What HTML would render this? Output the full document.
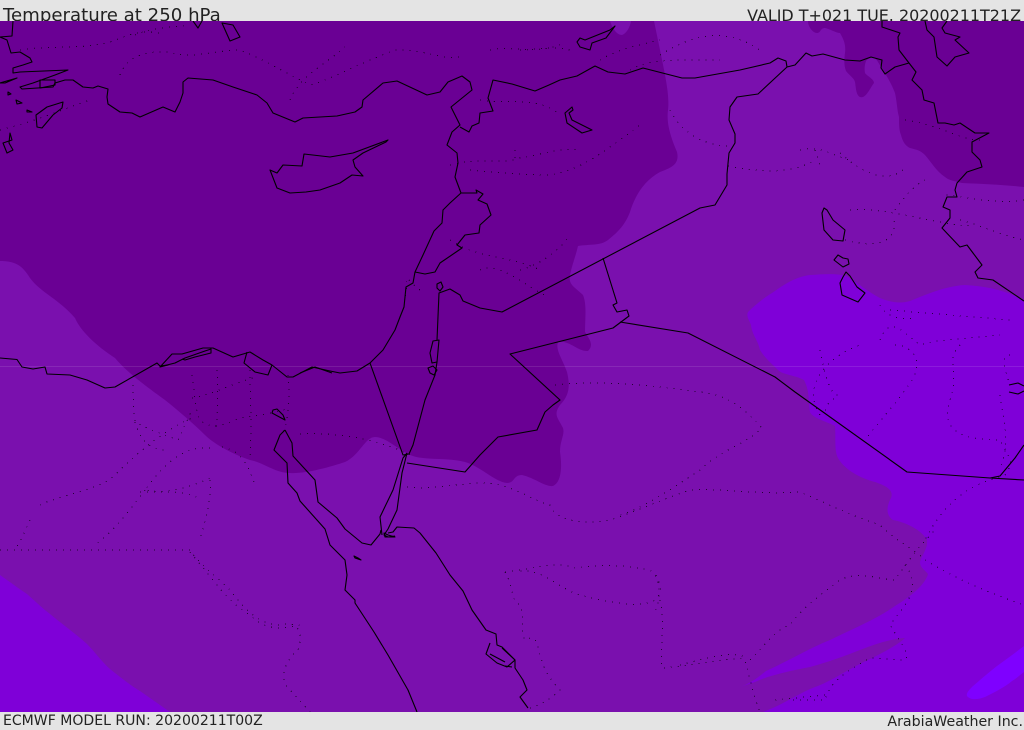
<!DOCTYPE html>
<html><head><meta charset="utf-8"><style>
html,body{margin:0;padding:0;background:#e4e4e4;width:1024px;height:729px;overflow:hidden}
.t{position:absolute;font-family:"DejaVu Sans",sans-serif;color:#222;white-space:nowrap;line-height:1}
svg{position:absolute;left:0;top:21px}
</style></head><body>
<div class="t" style="left:3px;top:7px;font-size:18.15px">Temperature at 250 hPa</div>
<div class="t" style="right:3px;top:8px;font-size:15.95px">VALID T+021 TUE. 20200211T21Z</div>
<div class="t" style="left:3px;top:714px;font-size:14.05px">ECMWF MODEL RUN: 20200211T00Z</div>
<div class="t" style="right:1px;top:715px;font-size:14.2px">ArabiaWeather Inc.</div>
<svg width="1024" height="691" viewBox="0 21 1024 691">
<rect x="0" y="21" width="1024" height="691" fill="#7a10ae"/>
<g fill="#6a0094">
<path d="M0,261C15,261 22,265 30,278C40,292 60,300 75,318C80,330 95,345 115,358C125,370 140,382 165,400C180,412 195,425 205,435C215,445 235,455 250,460C265,463 275,473 290,473C305,474 330,467 345,462C360,455 365,437 375,437C385,437 395,447 410,455C425,461 445,457 465,462C480,466 495,482 507,483C515,483 513,475 522,475C535,478 545,487 553,486C562,482 562,465 560,452C560,440 565,435 563,428C558,418 553,415 560,405C570,395 570,385 567,372C563,360 555,350 558,342C570,340 578,352 588,351C594,345 590,340 585,332C585,318 587,305 583,295C575,287 568,285 570,275C572,265 576,255 578,246C590,244 600,246 608,240C618,232 625,225 630,212C635,195 645,180 660,172C670,168 680,165 677,152C672,140 666,125 668,110C670,95 664,70 660,50L654,21L0,21Z"/>
<path d="M808,21C808,27 813,33 817,33C821,33 820,28 825,28C830,29 836,33 840,33C844,40 846,45 845,53C844,60 844,66 846,71C850,76 854,78 855,82C856,88 856,95 860,97C866,99 870,88 874,83C874,79 867,76 865,73C864,68 865,64 866,61C869,57 875,56 878,62C884,72 890,80 895,93C897,102 897,110 899,117C899,125 899,130 901,135C903,143 906,146 910,148C917,150 920,150 925,155C932,163 936,171 945,177C950,181 955,181 962,183C985,184 1005,185 1024,187L1024,21Z"/>
</g>
<path d="M610,21C612,27 616,35 622,35C627,33 630,27 631,21Z" fill="#7a10ae"/>
<g fill="#7f00d8">
<path d="M748,312C755,305 765,297 772,293C785,284 795,277 810,275C825,274 840,273 848,277C858,283 868,292 880,298C890,302 900,304 910,301C925,295 945,286 965,285C985,286 1005,290 1024,300L1024,712L763,712L775,707C790,700 800,693 815,687C830,682 850,668 870,659C880,654 898,645 905,638C890,639 875,644 860,650C845,656 825,663 810,667C790,671 770,675 755,682L737,688C750,684 757,678 766,671C790,660 810,648 830,640C850,630 875,620 895,606C910,597 925,585 928,574C925,570 920,568 920,562C923,553 928,548 927,540C922,530 905,522 893,520C885,515 887,505 891,498C895,488 880,484 875,482C860,478 845,470 838,458C834,450 836,438 835,426C828,422 812,418 810,412C808,400 810,392 804,380C795,375 783,375 778,370C770,362 765,358 760,350C758,340 752,335 751,325C749,320 746,316 748,312Z"/>
<path d="M0,575C10,582 18,588 27,594C35,601 42,608 50,614C62,624 76,634 87,644C95,652 102,662 110,669C120,677 130,685 140,691C150,698 160,705 170,712L0,712Z"/>
</g>
<path d="M1024,646C1015,653 1005,660 997,666C988,673 980,680 973,686C969,690 966,693 967,696C970,700 977,700 985,697C995,692 1005,687 1012,681C1017,678 1020,675 1024,672Z" fill="#7f00ff"/>
<rect x="0" y="366" width="1024" height="1" fill="#fff" opacity=".1"/>

<g fill="none" stroke="#000" stroke-width="1" stroke-dasharray="1 6" opacity=".7" shape-rendering="crispEdges">
<path d="M20,50C50,45 80,50 110,42C130,35 135,30 160,33M120,75C125,60 140,50 170,52C190,60 215,50 240,50C265,60 280,70 310,85C330,80 355,65 395,50C420,48 440,60 460,57M135,35C150,28 165,28 190,25M290,100C300,75 325,65 345,47M450,165C480,157 500,165 520,158C540,155 560,147 580,150M490,50C510,45 530,55 560,45M470,170C490,172 520,175 550,175C580,170 600,155 640,125M520,50C540,50 545,45 570,50M630,70C650,58 680,60 720,60M670,110C680,130 700,145 728,146M660,55C700,30 730,30 760,50M728,166C760,172 790,175 815,160M840,153C870,180 890,180 903,170M815,150L820,165M895,210C905,195 915,185 925,180M845,240C880,250 900,240 893,215M850,210C880,205 960,230 970,225M905,120C940,125 960,140 980,140M1024,200C990,205 960,195 945,195M960,220C980,225 1000,235 1024,240"/>
<path d="M0,130C40,120 60,110 90,100M600,60C620,48 640,45 660,40M480,100C500,105 540,95 560,115M515,150L515,160M450,240C480,260 510,255 540,270M480,270C500,260 530,290 545,295M420,290C400,275 410,270 405,300M520,270C540,265 560,250 570,235"/>
<path d="M133,385C133,400 134,412 135,422C150,430 165,435 178,440L192,410M192,375C195,395 195,410 200,420C210,430 225,425 240,418C255,415 270,415 289,408M192,398C210,395 230,385 255,377M217,370C218,395 218,420 215,432M250,370C250,390 252,420 250,460M288,375C290,395 289,420 283,432M300,434C340,432 380,440 410,455M222,447C235,450 245,455 255,485M135,422C140,440 150,450 165,450M210,448C180,445 160,470 145,490C170,495 195,485 210,478M40,505C60,495 100,490 115,475C140,450 165,430 192,418M30,520C25,530 22,540 15,549M145,490C130,510 115,530 95,545M210,480C212,500 205,520 200,540M0,550L190,550C200,565 215,575 230,590C245,610 260,625 280,625C295,620 305,630 298,650C285,660 278,680 290,690L310,712M190,552C210,575 225,600 250,615C265,630 280,630 300,625M140,492C165,492 190,490 200,500"/>
<path d="M407,487C430,490 445,485 480,483C510,482 530,500 550,505C555,520 580,525 610,520C640,510 660,500 690,490C720,488 760,495 800,492C830,505 850,515 880,525C895,540 915,550 925,560M555,385C600,380 650,385 700,392C730,395 745,410 762,428C745,445 720,450 700,470C670,490 640,510 620,515M505,572C530,570 555,560 575,568C600,565 620,564 650,570C660,580 665,590 655,600C640,610 600,600 580,595C560,590 540,565 515,572M505,572C515,590 510,600 520,605C525,620 520,630 525,640C545,630 530,660 560,690C550,700 540,705 530,708M660,600C665,620 660,650 662,668C700,665 740,655 745,660C750,680 755,700 760,712M656,575C660,585 660,600 656,610M680,665C700,660 730,650 745,657M750,660C770,640 775,630 790,625C800,610 820,595 840,580C860,570 880,580 895,580C905,565 920,545 935,530M905,565C925,590 900,610 890,625C905,650 910,655 905,660L870,658C850,670 830,680 825,700L790,700M925,560C950,575 980,590 1024,605M825,695L775,700M800,150C820,145 830,155 850,160"/>
<path d="M820,350C825,375 830,395 838,395C835,400 827,400 825,412M820,415C800,385 830,355 860,345M880,340C890,315 900,330 920,345C935,340 950,340 1000,335M895,345C910,345 930,360 905,390C895,405 880,420 865,440M960,345C945,360 960,370 950,400C940,430 960,440 1000,440C1010,460 1015,460 1005,475L990,480C960,490 940,510 925,540M1000,395C1005,430 1010,440 1000,470M890,310L1010,320M880,305C885,315 895,320 915,318M1010,355C1000,355 1005,370 1010,385"/>
</g>

<g fill="none" stroke="#000" stroke-width="1.1" stroke-linejoin="round">
<path d="M0,358L17,359.500L22,367L33,369L45,367L47,374L70,375L87,380L105,388L115,387L157,363L160,366L168,365L160,367L172,354L182,354L203,348L213,348L233,357L250,352L263,360L272,365L287,377L293,377L312,367L330,371L340,373L357,371L370,363L383,350L395,330L400,317L404,307L406,287L413,283L415,272L423,255L434,231L442,223L443,210L450,203L461,193"/>
<path d="M163,366L175,363L185,358L205,351L211,349L211,353L195,357L185,360L182,359M247,352L244,363L255,372L268,375L272,365M300,373L315,367L332,373"/>
<path d="M0,37L12,36L13,21M0,37L7,40L11,53L20,52L30,58L32,62L23,65L13,68L13,73L20,72L68,70L55,75L33,83L20,87L22,89L53,87L55,83L65,80L73,80L83,87L93,88L98,86L108,89L107,97L108,104L120,112L132,113L140,117L163,107L175,112L180,102L183,93L183,82L188,78L213,80L233,87L257,95L267,103L273,113L295,122L303,118L337,116L355,112L362,107L363,100L383,83L397,81L427,95L440,92L448,82L462,76L470,82L472,90L451,107L460,125L452,132L447,145L457,153L458,163L455,177L461,193"/>
<path d="M460,127L469,132L472,126L479,123L480,113L493,111L488,98L493,80L512,84L535,91L549,85L560,80L577,76L595,66L608,72L625,74L643,68L682,78L695,78L740,70L770,63L778,58L786,61L787,67L795,65L806,53L812,56L823,54L845,60L860,61L871,57L882,60L881,68L885,74L895,67L909,63"/>
<path d="M787,67L758,94L737,97L730,107L729,120L735,134L735,143L729,153L727,174L727,185L715,205L700,208L502,312L480,308L463,301L460,295L450,289L439,293L437,340M437,362L435,375L425,400L417,430L413,445L409,454L403,455L370,363"/>
<path d="M461,193L477,193L476,190L483,194L478,200L487,204L491,215L480,225L479,233L465,235L457,245L462,248L440,263L435,272L425,274L415,272"/>
<path d="M437,284L441,282L443,287L440,291L437,288Z"/>
<path d="M433,341L439,340L437,362L432,363L430,353ZM428,368L433,366L437,370L434,375L430,373Z"/>
<path d="M603,258L617,303L613,305L617,312L627,310L629,316L613,328L510,354L560,400L553,405L545,412L537,430L498,437L480,455L465,472L407,463"/>
<path d="M620,322L688,333L775,377L795,392L907,472L990,478L1024,480"/>
<path d="M990,478L1000,476L1015,458L1024,445"/>
<path d="M909,63L899,50L898,37L900,33L882,27L882,21M909,63L916,72L912,80L922,90L924,100L934,103L938,123L945,123L954,125L960,123L975,133L989,133L972,142L972,152L980,160L982,167L967,172L957,183L955,190L957,197L947,197L943,207L950,210L950,218L942,228L960,247L967,245L973,253L982,265L975,272L978,278L993,280L1024,301"/>
<path d="M925,21L927,30L934,37L937,57L947,66L955,57L969,53L955,40L960,37L945,33L942,28L947,21"/>
<path d="M577,42L580,38L585,40L610,30L615,26L606,38L592,43L590,50L580,47Z"/>
<path d="M572,107L565,113L567,123L582,133L592,130L572,120L569,113L573,110Z"/>
<path d="M270,170L277,173L283,165L302,166L304,154L330,157L353,153L388,140L386,142L363,153L353,160L355,167L363,176L352,175L340,183L320,190L306,192L290,193L277,188Z"/>
<path d="M63,102L47,107L36,115L37,127L42,128L53,115L62,108Z"/>
<path d="M10,133L12,140L3,143L7,153L13,150L9,143Z"/>
<path d="M193,21L198,28L202,21M222,23L230,41L240,37L233,25Z"/>
<path d="M0,83L17,78L5,83ZM40,80L55,80L55,85L40,88Z"/>
<path d="M8,92L11,94L8,95ZM16,100L22,103L17,104ZM27,110L32,112L27,112Z"/>
<path d="M824,208L822,213L824,230L833,240L843,241L845,230L833,220L827,210Z"/>
<path d="M838,255L834,260L843,267L849,264L848,259L843,258Z"/>
<path d="M846,272L843,277L840,283L842,295L858,302L865,293L857,287L850,276Z"/>
<path d="M1009,385L1018,383L1024,386M1009,392L1018,394L1024,391"/>
<path d="M285,430L280,435L274,450L287,463L288,483L297,493L300,501L325,529L330,545L345,560L347,575L345,590L355,600L355,603L374,632L388,655L408,690L417,712"/>
<path d="M285,430L292,443L293,456L315,480L318,502L337,518L345,529L362,543L371,545L380,534L381,530"/>
<path d="M273,410L272,413L285,420L283,415L277,409Z"/>
<path d="M407,453L403,458L393,490L380,517L382,535M407,453L402,473L397,510L388,529L384,535L388,537L395,536M388,533L393,532L397,527L414,528L420,533L436,553L450,575L463,591L472,610L486,630L496,634L497,645L502,647L515,660L515,668L523,680L527,690L520,697L528,708"/>
<path d="M490,643L486,654L497,663L507,667L515,660L502,648M505,666L512,667M490,654L505,662"/>
<path d="M354,556L358,558L361,560L355,558Z"/>
<path d="M384,533L388,535L395,537L385,537Z"/>
</g>
</svg>
</body></html>
